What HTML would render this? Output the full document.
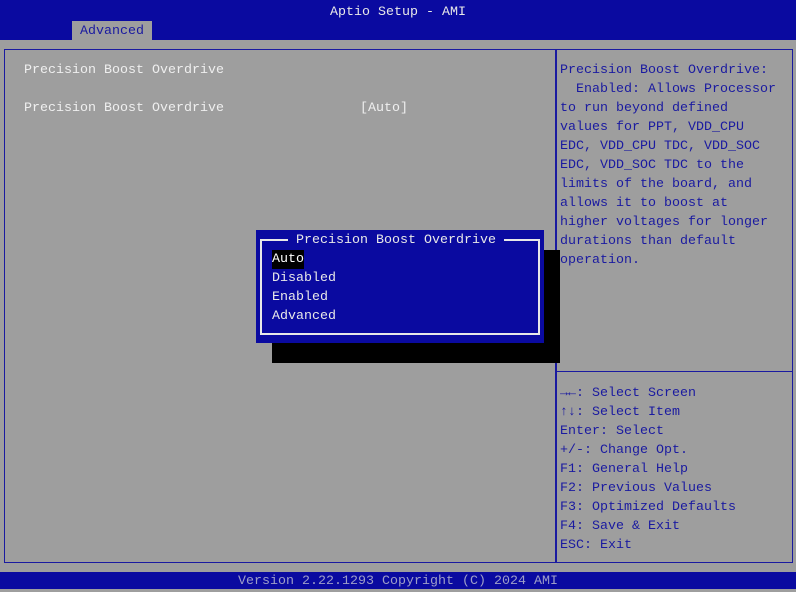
<!DOCTYPE html>
<html><head><style>
*{margin:0;padding:0;box-sizing:border-box}
body{width:796px;height:589px;background:#9e9e9e;position:relative;overflow:hidden;font-family:"Liberation Mono","DejaVu Sans Mono",monospace;font-size:13.33px;line-height:19px}
.a{position:absolute;white-space:pre}
#top{left:0;top:0;width:796px;height:40px;background:#0a0aa0}
#tab{left:72px;top:21px;width:80px;height:19px;background:#9e9e9e;color:#1a1aa0;text-align:center;line-height:21px}
#title{left:0;top:3px;width:796px;text-align:center;color:#e8e8e8}
#frame{left:4px;top:49px;width:789px;height:514px;border:1px solid #1a1aa0}
#div{left:555px;top:49px;width:2px;height:514px;background:#1a1aa0}
#hl{left:557px;top:371px;width:235px;height:1px;background:#1a1aa0}
.w{color:#efefef}
.b{color:#1a1aa0}
#bot{left:0;top:572px;width:796px;height:17px;background:#0a0aa0;color:#9e9ec8;text-align:center;line-height:20px}
#shadow{left:272px;top:250px;width:288px;height:113px;background:#000}
#pop{left:256px;top:230px;width:288px;height:113px;background:#0a0aa0}
#inner{left:260px;top:239px;width:280px;height:96px;border:2px solid #e8e8e8}
#ptitle{left:288px;top:231px;background:#0a0aa0;color:#e8e8e8;padding:0 8px}
.it{color:#e8e8e8}
</style></head><body>
<div class="a" id="top"></div>
<div class="a" id="title">Aptio Setup - AMI</div>
<div class="a" id="tab">Advanced</div>
<div class="a" id="frame"></div>
<div class="a" id="div"></div>
<div class="a" id="hl"></div>
<div class="a w" style="left:24px;top:61px">Precision Boost Overdrive</div>
<div class="a w" style="left:24px;top:99px">Precision Boost Overdrive</div>
<div class="a w" style="left:360px;top:99px">[Auto]</div>
<div class="a b" style="left:560px;top:61px">Precision Boost Overdrive:
  Enabled: Allows Processor
to run beyond defined
values for PPT, VDD_CPU
EDC, VDD_CPU TDC, VDD_SOC
EDC, VDD_SOC TDC to the
limits of the board, and
allows it to boost at
higher voltages for longer
durations than default
operation.</div>
<div class="a b" style="left:560px;top:384px"><b>→←</b>: Select Screen
<b>↑↓</b>: Select Item
Enter: Select
+/-: Change Opt.
F1: General Help
F2: Previous Values
F3: Optimized Defaults
F4: Save &amp; Exit
ESC: Exit</div>
<div class="a" id="shadow"></div>
<div class="a" id="pop"></div>
<div class="a" id="inner"></div>
<div class="a" id="ptitle">Precision Boost Overdrive</div>
<div class="a it" style="left:272px;top:250px;background:#000;color:#fff">Auto</div>
<div class="a it" style="left:272px;top:269px">Disabled</div>
<div class="a it" style="left:272px;top:288px">Enabled</div>
<div class="a it" style="left:272px;top:307px">Advanced</div>
<div class="a" id="bot">Version 2.22.1293 Copyright (C) 2024 AMI</div>
</body></html>
